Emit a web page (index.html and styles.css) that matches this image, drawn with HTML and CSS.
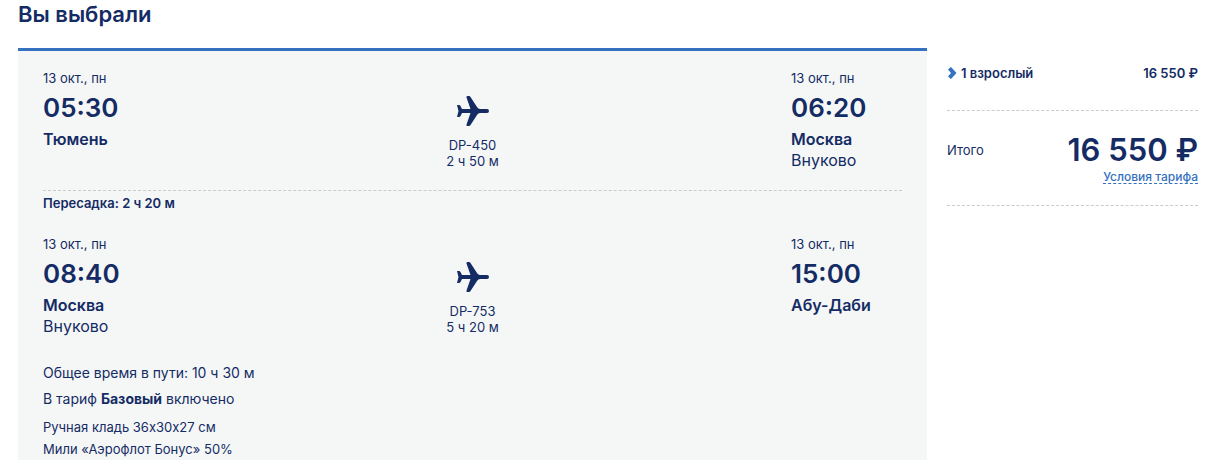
FILE: index.html
```html
<!DOCTYPE html>
<html lang="ru">

<head>
    <meta charset="UTF-8">
    <meta name="viewport" content="width=device-width, initial-scale=1.0">
    <title>Вы выбрали</title>
    <link rel="stylesheet" href="styles.css">
</head>

<body>
    <main class="page">
        <h1 class="title">Вы выбрали</h1>
        <div class="columns">
            <section class="trip">
                <div class="leg">
                    <div class="point">
                        <div class="date">13 окт., пн</div>
                        <div class="time">05:30</div>
                        <div class="city">Тюмень</div>
                    </div>
                    <div class="flight">
                        <svg class="plane" viewBox="0 0 32 30" aria-hidden="true">
                            <path d="M0 9h2q1 0 1.500 1L5 13h8.500L9.500 1.500Q9 0 10.500 0h1.500q1 0 1.500 1L20 11q1.300 2 3 2h7q2 0 2 2t-2 2h-7q-1.700 0-3 2l-6.500 10q-.5 1-1.500 1h-1.500q-1.500 0-1-1.500L13.500 17H5l-1.500 3q-.5 1-1.500 1H0l1.500-6z" />
                        </svg>
                        <div>DP-450</div>
                        <div>2 ч 50 м</div>
                    </div>
                    <div class="point">
                        <div class="date">13 окт., пн</div>
                        <div class="time">06:20</div>
                        <div class="city">Москва</div>
                        <div class="airport">Внуково</div>
                    </div>
                </div>
                <div class="transfer">Пересадка: 2 ч 20 м</div>
                <div class="leg">
                    <div class="point">
                        <div class="date">13 окт., пн</div>
                        <div class="time">08:40</div>
                        <div class="city">Москва</div>
                        <div class="airport">Внуково</div>
                    </div>
                    <div class="flight">
                        <svg class="plane" viewBox="0 0 32 30" aria-hidden="true">
                            <path d="M0 9h2q1 0 1.500 1L5 13h8.500L9.500 1.500Q9 0 10.500 0h1.500q1 0 1.500 1L20 11q1.300 2 3 2h7q2 0 2 2t-2 2h-7q-1.700 0-3 2l-6.500 10q-.5 1-1.500 1h-1.500q-1.500 0-1-1.500L13.500 17H5l-1.500 3q-.5 1-1.500 1H0l1.500-6z" />
                        </svg>
                        <div>DP-753</div>
                        <div>5 ч 20 м</div>
                    </div>
                    <div class="point">
                        <div class="date">13 окт., пн</div>
                        <div class="time">15:00</div>
                        <div class="city">Абу-Даби</div>
                    </div>
                </div>
                <div class="summary">
                    <p>Общее время в пути: 10 ч 30 м</p>
                    <p>В тариф <b>Базовый</b> включено</p>
                </div>
                <ul class="included">
                    <li>Ручная кладь 36х30х27 см</li>
                    <li>Мили «Аэрофлот Бонус» 50%</li>
                </ul>
            </section>

            <aside class="price">
                <div class="passengers">
                    <button type="button" class="toggle">
                        <svg class="arrow" viewBox="0 0 10 12" aria-hidden="true">
                            <path d="M1 2.500L4 0l5.500 6L4 12 1 9.500 4 6z" />
                        </svg>
                        1 взрослый
                    </button>
                    <span class="amount">16 550 ₽</span>
                </div>
                <div class="total">
                    <span class="total-label">Итого</span>
                    <div class="total-value">
                        <div class="sum">16 550 ₽</div>
                        <a href="#" class="rules">Условия тарифа</a>
                    </div>
                </div>
            </aside>
        </div>
    </main>
</body>

</html>
```
FILE: styles.css
```css
* {
    box-sizing: border-box;
}

body {
    margin: 0;
    font-family: Inter, "Noto Sans", sans-serif;
    font-size: 13px;
    color: #142b64;
    background: #fff;
}

p,
ul {
    margin: 0;
    padding: 0;
    list-style: none;
}

.page {
    display: flex;
    flex-direction: column;
    min-height: 100vh;
    padding: 0 20px 0 18px;
}

.title {
    margin: 0 0 20px;
    font-size: 22px;
    font-weight: 600;
    line-height: 28px;
}

.columns {
    display: flex;
    flex: 1;
    gap: 20px;
}

.trip {
    flex: 1;
    padding: 17px 25px 0;
    border-top: 3px solid #3571c0;
    background: #f5f7f7;
}

.leg {
    display: grid;
    grid-template-columns: 111px 1fr 111px;
}

.date {
    line-height: 20px;
}

.time {
    font-size: 26px;
    font-weight: 600;
    line-height: 40px;
}

.city {
    font-size: 16px;
    font-weight: 600;
    line-height: 22px;
}

.airport {
    font-size: 16px;
    line-height: 21px;
}

.flight {
    padding-top: 28px;
    text-align: center;
    line-height: 16px;
}

.plane {
    display: block;
    width: 32px;
    height: 30px;
    margin: 0 auto 11px;
    fill: #142b64;
}

.transfer {
    margin: 19px 0;
    border-top: 1px dashed #c8cccc;
    font-weight: 600;
    line-height: 24px;
}

.summary {
    margin: 23px 0 4px;
    font-size: 14px;
    line-height: 26px;
}

.summary b {
    font-weight: 700;
}

.included {
    font-size: 13px;
    line-height: 22px;
}

.price {
    width: 251px;
}

.passengers,
.total {
    display: flex;
    align-items: center;
    justify-content: space-between;
    border-bottom: 1px dashed #c8cccc;
}

.passengers {
    padding: 15px 0 27px;
    font-weight: 600;
    line-height: 20px;
}

.toggle {
    display: flex;
    align-items: center;
    gap: 4px;
    padding: 0;
    border: 0;
    background: none;
    color: inherit;
    font: inherit;
    cursor: pointer;
}

.arrow {
    width: 10px;
    height: 12px;
    fill: #3571c0;
}

.total {
    align-items: flex-start;
    padding: 18px 0 21px;
}

.total-label {
    line-height: 42px;
}

.total-value {
    display: flex;
    flex-direction: column;
    align-items: flex-end;
}

.sum {
    font-size: 31px;
    font-weight: 600;
    line-height: 41px;
}

.rules {
    border-bottom: 1px dashed #3571c0;
    color: #3571c0;
    font-size: 12px;
    font-weight: 500;
    line-height: 13px;
    text-decoration: none;
}
```
